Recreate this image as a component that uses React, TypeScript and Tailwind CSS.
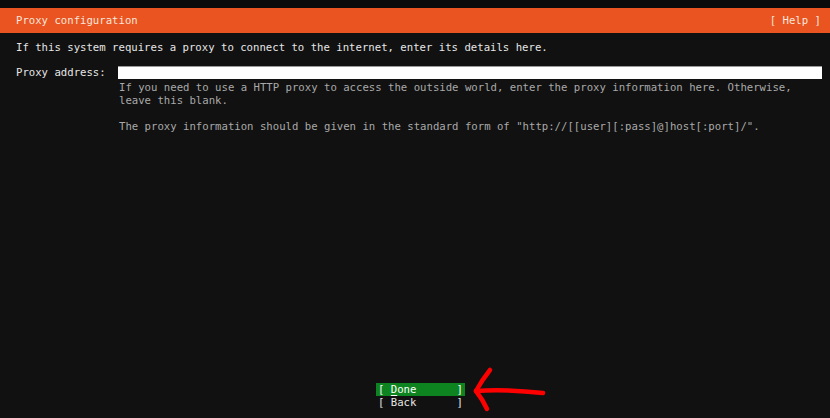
import React from 'react';

const mono = { fontFamily: '"DejaVu Sans Mono", "Liberation Mono", monospace' };

const HelpText: React.FC = () => (
  <div className="text-[#a9a9a9] leading-[13px] ml-[1px] mt-[2px]">
    <div>If you need to use a HTTP proxy to access the outside world, enter the proxy information here. Otherwise,</div>
    <div>leave this blank.</div>
    <div className="h-[13px]" />
    <div>The proxy information should be given in the standard form of "http://[[user][:pass]@]host[:port]/".</div>
  </div>
);

export default function App() {
  return (
    <div
      className="relative w-[830px] h-[418px] bg-[#111111] text-[#e6e6e6] text-[10.65px] flex flex-col overflow-hidden"
      style={mono}
    >
      <div className="h-[8px] bg-[#0b0b0b]" />
      <div className="h-[25px] bg-[#e95420] text-[#f8e6dd] flex items-center justify-between pl-[16px] pr-[9px] pt-[1px]">
        <span>Proxy configuration</span>
        <span>[ Help ]</span>
      </div>

      <div className="pl-[16px] pr-[8px] pt-[8px] leading-[13px]">
        <div>If this system requires a proxy to connect to the internet, enter its details here.</div>

        <div className="flex mt-[12px]">
          <div className="w-[102px] shrink-0 leading-[13px]">Proxy address:</div>
          <div className="flex-1">
            <div className="h-[13px] bg-white border-t border-[#9a9a9a]" />
            <HelpText />
          </div>
        </div>
      </div>

      <div className="flex-1" />

      <div className="flex justify-center pl-[11px] pb-[9px] leading-[13px]">
        <div className="w-[89px]">
          <div className="bg-[#0e8420] text-white flex justify-between px-[2px]">
            <span>
              [ <span className="underline underline-offset-2">D</span>one
            </span>
            <span>]</span>
          </div>
          <div className="flex justify-between px-[2px]">
            <span>[ Back</span>
            <span>]</span>
          </div>
        </div>
      </div>

      <svg
        className="absolute left-0 top-0 pointer-events-none"
        width="830"
        height="418"
        viewBox="0 0 830 418"
      >
        <g fill="none" stroke="#ff0000" strokeWidth="4.5" strokeLinecap="round" strokeLinejoin="round">
          <path d="M476 391 Q 505 389 543 393" />
          <path d="M476 391 Q 482 380 490 370" />
          <path d="M476 391 Q 483 400 487 409" />
        </g>
      </svg>
    </div>
  );
}
